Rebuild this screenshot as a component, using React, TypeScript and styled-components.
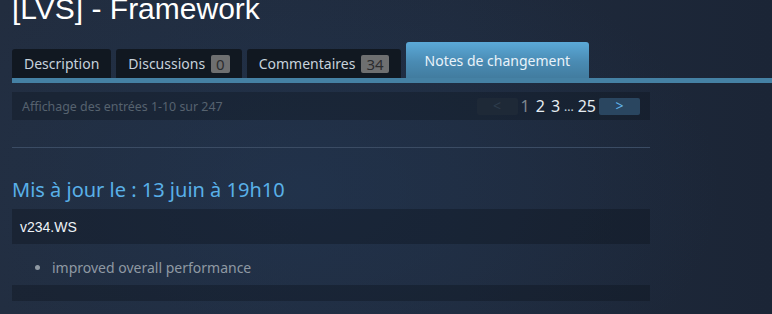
import styled, { createGlobalStyle } from 'styled-components';

const GlobalStyle = createGlobalStyle`
	html, body {
		margin: 0;
		padding: 0;
		height: 100%;
	}
	body {
		background:
			radial-gradient(ellipse 420px 260px at 300px 190px, rgba(34, 56, 86, 0.55) 0%, rgba(34, 56, 86, 0) 100%),
			linear-gradient(to right, #222d3f 0%, #1f2a3c 60%, #1b2536 100%);
		overflow: hidden;
	}
`;

const Page = styled.div`
	width: 772px;
	height: 314px;
	padding-left: 12px;
	box-sizing: border-box;
	font-family: 'Noto Sans', 'Open Sans', Arial, sans-serif;
`;

const Title = styled.h1`
	margin: -6px 0 6px;
	height: 42px;
	font-family: 'Liberation Sans', Arial, sans-serif;
	font-weight: 400;
	font-size: 30px;
	line-height: 30px;
	color: #ffffff;
	white-space: nowrap;
`;

const TabRow = styled.div`
	display: flex;
	align-items: flex-end;
	gap: 5px;
	border-bottom: 5px solid #4581a4;
`;

const Tab = styled.div<{ $active?: boolean }>`
	display: flex;
	align-items: center;
	justify-content: center;
	gap: 6px;
	box-sizing: border-box;
	height: ${(p) => (p.$active ? '36px' : '29px')};
	padding: 0 ${(p) => (p.$active ? '19px' : '12px')};
	border-radius: 3px 3px 0 0;
	font-size: 14px;
	color: ${(p) => (p.$active ? '#e9f3fa' : '#c7d2dc')};
	background: ${(p) =>
		p.$active ? 'linear-gradient(to bottom, #5ba9d8 0%, #4a8bb3 55%, #427c9f 100%)' : '#111821'};
	white-space: nowrap;
`;

const Badge = styled.span`
	display: inline-block;
	padding: 0 5px;
	height: 18px;
	line-height: 18px;
	border-radius: 2px;
	background: #6e6f70;
	color: #2b2c2e;
	font-size: 15px;
`;

const Content = styled.div`
	width: 638px;
`;

const PagingBar = styled.div`
	margin-top: 9px;
	height: 28px;
	display: flex;
	align-items: center;
	justify-content: space-between;
	padding: 0 10px;
	background: rgba(10, 16, 24, 0.3);
`;

const PagingInfo = styled.span`
	font-size: 12.4px;
	color: #56626f;
`;

const Pager = styled.div`
	display: flex;
	align-items: center;
`;

const PageButton = styled.span<{ $disabled?: boolean }>`
	display: flex;
	align-items: center;
	justify-content: center;
	width: 41px;
	height: 17px;
	border-radius: 2px;
	font-size: 14px;
	line-height: 1;
	color: ${(p) => (p.$disabled ? '#2e3d4d' : '#62b6ec')};
	background: ${(p) => (p.$disabled ? '#1e2937' : '#2a4660')};
`;

const PageNumber = styled.span<{ $current?: boolean }>`
	font-size: 16px;
	margin: 0 3px;
	color: ${(p) => (p.$current ? '#7e878f' : '#e6edf2')};
`;

const Ellipsis = styled.span`
	font-size: 12px;
	color: #c6d4df;
	margin: 0 1px;
`;

const Divider = styled.hr`
	margin: 27px 0 0;
	border: none;
	height: 1px;
	background: #3b4c64;
`;

const Heading = styled.h2`
	margin: 29px 0 0;
	height: 32px;
	font-size: 20px;
	font-weight: 400;
	line-height: 26px;
	color: #59b0e8;
	white-space: nowrap;
`;

const VersionBox = styled.div`
	height: 35px;
	display: flex;
	align-items: center;
	padding: 0 8px;
	background: rgba(12, 18, 26, 0.35);
	font-family: 'Liberation Sans', Arial, sans-serif;
	font-size: 14px;
	color: #eef3f7;
`;

const Notes = styled.ul`
	margin: 0;
	padding: 14px 0 8px 40px;
	list-style: disc;
`;

const Note = styled.li`
	font-size: 14px;
	line-height: 19px;
	color: #8f99a3;
	&::marker {
		color: #8f99a3;
	}
`;

const FooterBar = styled.div`
	height: 16px;
	background: rgba(12, 18, 26, 0.35);
`;

export default function App() {
	return (
		<>
			<GlobalStyle />
			<Page>
				<Title>[LVS] - Framework</Title>
				<TabRow>
					<Tab>Description</Tab>
					<Tab>
						Discussions <Badge>0</Badge>
					</Tab>
					<Tab>
						Commentaires <Badge>34</Badge>
					</Tab>
					<Tab $active>Notes de changement</Tab>
				</TabRow>
				<Content>
					<PagingBar>
						<PagingInfo>Affichage des entrées 1-10 sur 247</PagingInfo>
						<Pager>
							<PageButton $disabled>&lt;</PageButton>
							<PageNumber $current>1</PageNumber>
							<PageNumber>2</PageNumber>
							<PageNumber>3</PageNumber>
							<Ellipsis>...</Ellipsis>
							<PageNumber>25</PageNumber>
							<PageButton>&gt;</PageButton>
						</Pager>
					</PagingBar>
					<Divider />
					<Heading>Mis à jour le : 13 juin à 19h10</Heading>
					<VersionBox>v234.WS</VersionBox>
					<Notes>
						<Note>improved overall performance</Note>
					</Notes>
					<FooterBar />
				</Content>
			</Page>
		</>
	);
}
